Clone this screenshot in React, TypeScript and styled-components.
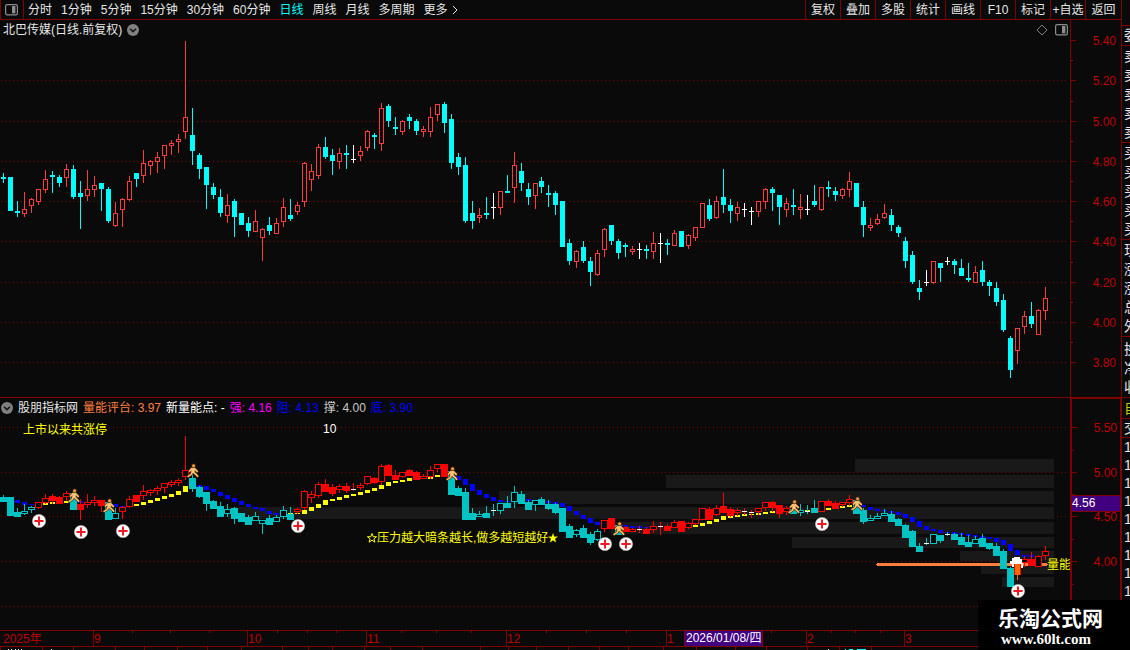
import React from 'react';
import styled, { createGlobalStyle } from 'styled-components';

const BG = '#0a0a0a';
const LINE = '#800000';
const LABEL = '#c00000';

const GlobalStyle = createGlobalStyle`
  * { box-sizing: border-box; }
  body {
    margin: 0;
    background: ${BG};
    color: #e6e6e6;
    font-family: "Liberation Sans", "Noto Sans CJK SC", sans-serif;
    font-size: 12px;
    line-height: 16px;
    overflow: hidden;
  }
  svg { display: block; }
  svg text { font-size: 12px; }
`;

const Page = styled.div`
  position: relative;
  display: flex;
  height: 100vh;
  overflow: hidden;
`;

const Main = styled.main`
  flex: 1;
  min-width: 0;
  display: flex;
  flex-direction: column;

  & > * { flex-shrink: 0; }
`;

const Toolbar = styled.header`
  display: flex;
  height: 20px;
  border-bottom: 1px solid ${LINE};
  border-left: 1px solid ${LINE};
  overflow: hidden;
`;

const ToolButton = styled.button<{ $active?: boolean }>`
  display: block;
  margin: 0;
  padding: 0;
  border: 0;
  background: none;
  font: inherit;
  line-height: 18px;
  white-space: nowrap;
  color: ${(p) => (p.$active ? '#00ffff' : '#e6e6e6')};
`;

const LayoutButton = styled(ToolButton)`
  width: 23px;
  padding: 0 0 0 4px;
  border-right: 1px solid ${LINE};
`;

const Periods = styled.nav`
  flex: 1;
  display: flex;
  gap: 9px;
  padding-left: 4px;
`;

const MoreButton = styled(ToolButton)`
  display: flex;
  align-items: center;
  gap: 4px;
`;

const Actions = styled.nav`
  display: flex;
`;

const ActionButton = styled(ToolButton)`
  width: 35px;
  border-left: 1px solid ${LINE};

  &:last-child { width: 36px; }
`;

const Panel = styled.section`
  display: flex;
  border-bottom: 1px solid ${LINE};
`;

const Plot = styled.div`
  flex: 1;
  min-width: 0;
`;

const PlotHeader = styled.div`
  display: flex;
  align-items: center;
  height: 19px;
  gap: 5px;
  padding: 0 2px 0 1px;
  white-space: nowrap;
`;

const Title = styled.h1`
  margin: 0 0 0 2px;
  font: inherit;
`;

const HeaderTools = styled.div`
  display: flex;
  align-items: center;
  gap: 7px;
  margin-left: auto;
`;

const Reading = styled.span<{ $color: string }>`
  color: ${(p) => p.$color};
`;

const Axis = styled.div<{ $boxed?: boolean }>`
  position: relative;
  width: 51px;
  border: 0 solid ${LINE};
  border-width: ${(p) => (p.$boxed ? '1px 1px 0 2px' : '0 0 0 1px')};
`;

const ValueTag = styled.output`
  position: absolute;
  left: 0;
  right: 0;
  top: 96px;
  height: 17px;
  line-height: 15px;
  border: 1px solid ${LINE};
  border-width: 1px 0;
  background: #400080;
  color: #ffffff;
`;

const DateRow = styled.div`
  position: relative;
  height: 16px;
  border-bottom: 1px solid ${LINE};
`;

const DateTag = styled.time`
  position: absolute;
  left: 684px;
  top: 0;
  width: 79px;
  height: 15px;
  line-height: 14px;
  padding-left: 1px;
  border: 1px solid ${LINE};
  border-width: 0 1px;
  background: #400080;
  color: #ffffff;
  white-space: nowrap;
`;

const Side = styled.aside`
  width: 9px;
  overflow: hidden;
  border-left: 1px solid ${LINE};
  padding-top: 25px;
  font-size: 14px;
`;

const SideGroup = styled.div<{ $row: number; $pad?: number; $color?: string }>`
  border-top: 1px solid ${LINE};
  padding: ${(p) => p.$pad || 0}px 0 0 2px;
  line-height: ${(p) => p.$row}px;
  color: ${(p) => p.$color || '#e6e6e6'};
`;

const SideRow = styled.div`
  white-space: nowrap;
`;

const Watermark = styled.footer`
  position: absolute;
  right: 0;
  bottom: 0;
  width: 152px;
  height: 50px;
  padding: 4px 0 0 20px;
  background: #000000;
  color: #ffffff;
`;

const MarkName = styled.div`
  font: bold 21px/26px "Noto Sans CJK SC", sans-serif;
  white-space: nowrap;
`;

const MarkLink = styled.a`
  display: block;
  padding-left: 3px;
  font: bold 15px/18px "Liberation Serif", serif;
  color: #ffffff;
  text-decoration: none;
`;

// One entry per day: kind (c = fall, r = rise, w = unchanged), high, body top, body bottom, low.
const RAW = `c173,177,179,183 c177,177,211,211 c201,211,213,217 r192,209,214,217 r198,199,206,213
r189,189,202,205 r170,179,190,193 c171,175,177,193 c175,177,183,187 r164,169,178,187
c165,169,197,199 c181,193,197,229 r170,189,196,201 r176,185,190,197 c183,183,189,211
c187,189,221,223 r202,213,226,227 r198,199,210,227 r176,181,200,201 c173,173,179,187
r150,163,176,183 r160,161,166,175 r152,157,162,173 r145,145,156,169 r140,143,146,155
r134,139,142,153 r41,117,132,139 c108,135,151,165 c153,155,169,179 c167,167,185,209
c183,187,195,199 c189,197,213,217 r194,205,216,223 c199,201,217,237 c213,213,225,225
c217,223,231,237 r210,221,232,232 r228,229,238,261 c217,225,231,235 r218,223,234,234
r198,207,222,227 c199,215,219,221 r202,205,212,215 r162,163,202,207 r164,171,180,191
r144,147,176,179 c137,147,157,159 c149,155,161,175 r148,153,162,169 c145,153,155,169
w145,159,160,163 r146,151,156,161 r130,131,148,151 c133,135,137,149 r103,108,144,151
c104,106,121,127 c117,127,129,135 r120,121,132,135 c114,117,121,129 c119,121,131,135
r126,129,132,137 r107,117,132,137 r104,104,115,121 c102,104,123,133 c114,119,163,169
c153,157,167,175 c157,165,221,223 c201,213,221,229 r208,215,218,223 c197,213,215,219
w193,207,208,219 r191,191,208,215 c175,191,193,193 r152,165,188,203 c163,171,183,191
c183,189,197,205 r183,183,196,209 c177,181,187,193 c185,193,195,207 c191,193,205,215
c201,201,247,247 c239,243,261,265 r250,251,262,268 c241,247,261,263 c257,261,272,286
r250,253,275,276 r228,229,250,257 c225,225,241,245 c239,241,253,259 c243,245,247,257
r246,249,252,255 w243,249,250,259 c245,249,251,259 r232,243,252,259 w233,243,244,263
c239,243,245,255 r230,233,246,246 c231,231,247,247 r234,235,246,249 r227,227,238,241
r203,203,228,228 c199,205,219,221 r196,201,218,219 c169,197,205,213 c199,205,211,223
r202,207,214,221 w203,209,210,217 w207,211,212,225 r201,201,212,217 r188,189,202,209
c187,189,193,211 c195,195,207,225 r198,203,210,217 c189,205,207,215 r194,207,210,219
w195,209,210,215 c185,201,205,207 r187,187,210,211 c181,187,189,197 c187,191,195,201
r188,189,196,199 r172,181,190,197 c183,183,207,207 c201,207,225,237 r218,225,228,231
r214,219,224,225 r204,213,218,219 c209,215,225,231 c225,227,233,237 c237,241,261,268
c251,255,282,284 c280,288,292,300 w270,282,283,286 r261,261,283,284 c263,263,268,282
w257,261,262,265 c259,261,265,274 c259,268,276,276 c263,278,280,282 r266,272,283,283
c261,270,282,286 c280,282,286,296 c282,288,302,306 c294,300,330,332 c336,338,370,378
r328,328,351,364 r311,316,327,334 c302,316,324,328 r309,310,335,335 r287,298,311,320`;

interface Candle {
  x: number;
  kind: string;
  high: number;
  top: number;
  bottom: number;
  low: number;
}

const CANDLES: Candle[] = RAW.split(/\s+/).map((s, i) => {
  const [high, top, bottom, low] = s.slice(1).split(',').map(Number);
  return { x: (i < 77 ? 3 : 2) + 7 * i, kind: s[0], high, top, bottom, low };
});

const centre = (i: number) => CANDLES[i].x;

// Strong (red) stretches of the lower chart, first and last day.
const STRONG = [[5, 9], [11, 14], [17, 26], [42, 63], [86, 87], [89, 112], [117, 121], [146, 149]];
const isStrong = (i: number) => STRONG.some(([a, b]) => i >= a && i <= b);

// Average ribbon: day, top, height.
const BLUE = `2,500,3 3,502,3 4,504,1 11,501,2 12,502,1 16,504,3 17,506,1 28,485,2 29,486,4 30,489,3 31,492,4
32,495,4 33,498,4 34,501,4 35,504,3 36,507,2 37,508,3 38,511,3 39,513,2 65,476,4 66,479,6 67,484,7 68,490,5
69,494,4 70,497,4 71,500,2 72,501,1 75,499,2 78,501,2 79,502,2 80,503,4 81,506,5 82,511,4 83,515,4 84,518,5
85,522,3 88,525,2 89,525,2 90,526,2 91,526,2 92,527,1 123,505,2 124,507,3 125,509,2 126,510,1 127,511,2
128,512,3 129,514,4 130,517,5 131,521,6 132,526,4 133,529,2 134,530,3 135,532,1 136,532,2 137,533,2 138,534,2
139,535,2 140,536,2 141,537,2 142,538,4 143,540,5 144,544,7 145,550,5 146,555,2 147,555,2`;
const YELLOW = `6,503,2 7,502,2 9,501,2 19,504,2 20,502,3 21,500,3 22,498,3 23,496,3 24,494,3 25,491,4 26,486,6
41,513,1 42,513,1 43,510,4 44,507,4 45,504,4 46,500,5 47,499,2 48,497,3 49,495,3 50,494,2 51,492,3 52,490,3
53,488,3 54,485,4 55,482,4 56,481,2 57,480,2 58,478,3 60,477,2 61,477,2 62,475,2 99,525,2 100,523,3 101,521,3
102,519,3 103,516,4 104,516,2 105,515,2 106,514,2 107,514,1 108,513,2 109,512,2 110,511,2 115,510,2 118,508,2
120,506,2 121,505,2`;
const ribbon = (s: string) => s.split(/\s+/).map((t) => t.split(',').map(Number));

// Pressure bars: start x, top, height. They all end at x = 1054.
const PRESSURE = [
  [855, 459, 13], [666, 475, 13], [499, 491, 13], [228, 507, 12], [611, 522, 12],
  [792, 537, 11], [960, 551, 10], [981, 566, 8], [1002, 577, 10],
];

const MEDIC = [[39, 521], [81, 532], [123, 531], [298, 526], [605, 544], [626, 544], [822, 524], [1018, 591]];
const RUNNER = [[74, 496], [109, 506], [193, 471], [452, 474], [619, 529], [794, 507], [857, 504]];

function GridLine({ y }: { y: number }) {
  return <line x1="1" x2="1068" y1={y} y2={y} stroke="#780808" strokeDasharray="1 3" transform="translate(0 .5)" />;
}

function PriceChart() {
  return (
    <svg width="100%" height="358" shapeRendering="crispEdges" role="img" aria-label="日线">
      <g transform="translate(0 -39)">
        {[80, 121, 161, 201, 241, 282, 322, 362].map((y) => <GridLine key={y} y={y} />)}
        {CANDLES.map((c) => {
          const color = c.kind === 'r' ? '#ff3c3c' : c.kind === 'c' ? '#00ffff' : '#ffffff';
          return (
            <g key={c.x} fill={color}>
              <rect x={c.x} y={c.high} width="1" height={c.low - c.high} />
              <rect x={c.x - 2} y={c.top} width="5" height={c.bottom - c.top} />
              {c.kind === 'r' && (
                <rect x={c.x - 1} y={c.top + 1} width="3" height={c.bottom - c.top - 2} fill={BG} />
              )}
            </g>
          );
        })}
      </g>
    </svg>
  );
}

const low = (v: number) => Math.round(472 + (v - 121) * 0.444);

function EnergyCandle({ c, i }: { c: Candle; i: number }) {
  if (i === 145) return null;
  const color = isStrong(i) ? '#ff0000' : '#00c4c4';
  const high = low(c.high);
  const top = low(c.top);
  const bottom = low(c.bottom);
  const height = c.kind === 'c' ? bottom - top + 4 : Math.max(bottom - top, 3);
  return (
    <g fill={color}>
      <rect x={c.x} y={high} width="1" height={Math.max(low(c.low) - high, 1)} />
      {c.kind === 'w' ? (
        <rect x={c.x - 2} y={top} width="5" height="1" fill="#ffffff" />
      ) : (
        <rect x={c.x - 3} y={top} width="7" height={height} />
      )}
      {c.kind === 'r' && <rect x={c.x - 2} y={top + 1} width="5" height={height - 2} fill={BG} />}
    </g>
  );
}

function Medic({ x, y }: { x: number; y: number }) {
  return (
    <g transform={`translate(${x} ${y})`} shapeRendering="auto">
      <circle r="6.6" fill="#ffffff" stroke="#b8b8b8" strokeWidth=".6" />
      <path d="M-4.6 0H4.6M0-4.6V4.6" stroke="#f01822" strokeWidth="2" />
    </g>
  );
}

function Runner({ x, y }: { x: number; y: number }) {
  const torso = 'M-1.6-2.8L1.8-2.8L1.6 1.6L-1.6 2Z';
  const limbs = 'M-1.2-2.4L-3.4 0M1.4-2.4L4.2 .4M-.8 1.6L-2 3.6L-4.8 5.4M.8 1.6L3 3.4L4.6 5.2';
  return (
    <g transform={`translate(${x} ${y})`} shapeRendering="auto" strokeLinecap="round" strokeLinejoin="round">
      <circle cx=".6" cy="-5.2" r="2.3" fill="#4c2a08" />
      <path d={limbs} fill="none" stroke="#4c2a08" strokeWidth="2.8" />
      <path d={torso} fill="#ffbe6c" stroke="#4c2a08" strokeWidth="1" />
      <circle cx=".6" cy="-5.2" r="1.6" fill="#e89840" />
      <path d={limbs} fill="none" stroke="#ffbe6c" strokeWidth="1.7" />
      <path d={torso} fill="#ffc878" />
    </g>
  );
}

const STAR = 'M0-4.5L1.2-1.3H4.6L1.9.8L2.9 4.2L0 2.2L-2.9 4.2L-1.9.8L-4.6-1.3H-1.2Z';

function EnergyChart() {
  return (
    <svg width="100%" height="213" shapeRendering="crispEdges" role="img" aria-label="量能评台">
      <g transform="translate(0 -417)">
        {[427, 472, 516, 561, 606].map((y) => <GridLine key={y} y={y} />)}
        {PRESSURE.map(([x, y, h]) => (
          <rect key={y} x={x} y={y} width={1054 - x} height={h} fill="#191919" />
        ))}
        {ribbon(BLUE).map(([i, y, h]) => (
          <rect key={i} x={centre(i) - 2} y={y} width="5" height={h} fill="#0000ff" />
        ))}
        {ribbon(YELLOW).map(([i, y, h]) => (
          <rect key={i} x={centre(i) - 2} y={y} width="5" height={h} fill="#ffff00" />
        ))}
        <rect x="877" y="563" width="170" height="3" fill="#ff7f40" />
        <rect x="876" y="564" width="172" height="1" fill="#ff7f40" />
        {CANDLES.map((c, i) => <EnergyCandle key={c.x} c={c} i={i} />)}
        <path d="M1014 557h6v2h2v4h1v5h-3v-3h-6v2h-2v-3h-2v-3h2v-3h2z" fill="#ffffff" />
        <rect x="1014" y="564" width="7" height="11" fill="#ff0000" />
        <rect x="1015" y="564" width="5" height="11" fill="#ff6a00" />
        <rect x="1017" y="575" width="1" height="5" fill="#ff6a00" />
        {RUNNER.map(([x, y]) => <Runner key={x} x={x} y={y} />)}
        {MEDIC.map(([x, y]) => <Medic key={x} x={x} y={y} />)}
        <g fill="#ffff00">
          <text x="23" y="434">上市以来共涨停</text>
          <text x="377" y="542">压力越大暗条越长,做多越短越好</text>
          <text x="1047" y="569">量能</text>
        </g>
        <text x="323" y="433" fill="#ffffff">10</text>
        <g shapeRendering="auto" stroke="#ffff00">
          <path d={STAR} transform="translate(372 538)" fill="none" />
          <path d={STAR} transform="translate(553 538)" fill="#ffff00" strokeWidth=".3" />
        </g>
      </g>
    </svg>
  );
}

interface ScaleProps {
  height: number;
  marks: [string, number][];
  minor: number[];
}

function Scale({ height, marks, minor }: ScaleProps) {
  return (
    <svg width="100%" height={height} shapeRendering="crispEdges">
      {marks.map(([label, y]) => (
        <g key={label}>
          <rect y={y} width="5" height="1" fill={LINE} />
          <text x="45" y={y + 5} textAnchor="end" fill={LABEL}>{label}</text>
        </g>
      ))}
      {minor.map((y) => <rect key={y} y={y} width="2" height="1" fill={LINE} />)}
    </svg>
  );
}

const MONTHS: [number, string][] = [[93, '9'], [247, '10'], [366, '11'], [506, '12'], [666, '1'], [806, '2'], [904, '3']];
const WEEKS = [132, 170, 209, 277, 307, 336, 401, 436, 471, 546, 586, 626, 771, 831, 855, 880];
const TABS = [0, 42, 73, 115, 144, 177, 207, 241, 282, 308, 332, 364, 390, 422, 480, 508, 536, 568, 599, 628, 663, 696, 735, 766, 807, 839, 871];

function DateScale() {
  return (
    <svg width="100%" height="15" shapeRendering="crispEdges">
      <text x="3" y="12" fill={LABEL}>2025年</text>
      {MONTHS.map(([x, label]) => (
        <g key={x}>
          <rect x={x} width="1" height="15" fill={LINE} />
          <text x={x + 1} y="12" fill={LABEL}>{label}</text>
        </g>
      ))}
      {WEEKS.map((x) => <rect key={x} x={x} width="1" height="2" fill={LINE} />)}
    </svg>
  );
}

function TabEdges() {
  return (
    <svg width="100%" height="3" shapeRendering="crispEdges">
      {TABS.map((x) => <rect key={x} x={x} width="1" height="3" fill={LINE} />)}
      <path d="M8 2h1v1h-1zM11 2h1v1h-1zM15 2h1v1h-1zM18 2h1v1h-1zM21 2h1v1h-1zM51 2h1v1h-1zM828 2h1v1h-1z" fill="#e6e6e6" />
      <path d="M845 2h1v1h-1zM849 2h4v1h-4zM857 2h9v1h-9z" fill="#00ffff" />
    </svg>
  );
}

function PanelIcon() {
  return (
    <svg width="13" height="12" viewBox="0 0 13 12">
      <rect x=".6" y=".6" width="11.8" height="10.2" rx="1.6" fill="none" stroke="#8c8c8c" strokeWidth="1.2" />
      <rect x="7" y="2" width="3.4" height="7.4" fill="#8c8c8c" />
    </svg>
  );
}

function DropIcon() {
  return (
    <svg width="12" height="12" viewBox="0 0 12 12">
      <circle cx="6" cy="6" r="6" fill="#808080" />
      <path d="M3 4.8L6 7.6L9 4.8" fill="none" stroke="#161616" strokeWidth="1.5" />
    </svg>
  );
}

const PERIODS = ['分时', '1分钟', '5分钟', '15分钟', '30分钟', '60分钟', '日线', '周线', '月线', '多周期'];
const ACTIONS = ['复权', '叠加', '多股', '统计', '画线', 'F10', '标记', '+自选', '返回'];

const READINGS: [string, string][] = [
  ['股朋指标网', '#e6e6e6'],
  ['量能评台: 3.97', '#ff7f40'],
  ['新量能点: -', '#ffffff'],
  ['强: 4.16', '#ff00ff'],
  ['阻: 4.13', '#0000ff'],
  ['撑: 4.00', '#c8c8c8'],
  ['底: 3.90', '#0000ff'],
];

const SIDE: { rows: string; row: number; pad?: number; color?: string }[] = [
  { rows: '委', row: 19 },
  { rows: '卖卖卖卖卖', row: 19, pad: 1 },
  { rows: '买买买买买', row: 19, pad: 1 },
  { rows: '现涨涨总外', row: 19, pad: 1 },
  { rows: '换净收', row: 19, pad: 3 },
  { rows: '自', row: 20, color: '#c8c800' },
  { rows: '交', row: 18 },
  { rows: '111111111', row: 18 },
];

export default function App() {
  return (
    <>
      <GlobalStyle />
      <Page>
        <Main>
          <Toolbar>
            <LayoutButton aria-label="布局"><PanelIcon /></LayoutButton>
            <Periods>
              {PERIODS.map((p) => <ToolButton key={p} $active={p === '日线'}>{p}</ToolButton>)}
              <MoreButton>
                更多
                <svg width="6" height="10" viewBox="0 0 6 10">
                  <path d="M1 1L5 5L1 9" fill="none" stroke="#e6e6e6" />
                </svg>
              </MoreButton>
            </Periods>
            <Actions>
              {ACTIONS.map((a) => <ActionButton key={a}>{a}</ActionButton>)}
            </Actions>
          </Toolbar>

          <Panel>
            <Plot>
              <PlotHeader>
                <Title>北巴传媒(日线.前复权)</Title>
                <DropIcon />
                <HeaderTools>
                  <svg width="12" height="12" viewBox="0 0 12 12">
                    <path d="M6 1L11 6L6 11L1 6Z" fill="none" stroke="#808080" />
                  </svg>
                  <PanelIcon />
                </HeaderTools>
              </PlotHeader>
              <PriceChart />
            </Plot>
            <Axis>
              <Scale
                height={377}
                marks={[['5.40', 20], ['5.20', 60], ['5.00', 101], ['4.80', 141], ['4.60', 181], ['4.40', 221], ['4.20', 262], ['4.00', 302], ['3.80', 342]]}
                minor={[40, 81, 121, 161, 201, 242, 282, 322]}
              />
            </Axis>
          </Panel>

          <Panel>
            <Plot>
              <PlotHeader>
                <DropIcon />
                {READINGS.map(([text, color]) => <Reading key={text} $color={color}>{text}</Reading>)}
              </PlotHeader>
              <EnergyChart />
            </Plot>
            <Axis $boxed>
              <Scale
                height={231}
                marks={[['5.50', 28], ['5.00', 73], ['4.50', 117], ['4.00', 162]]}
                minor={[51, 95, 140, 185]}
              />
              <ValueTag>4.56</ValueTag>
            </Axis>
          </Panel>

          <DateRow>
            <DateScale />
            <DateTag dateTime="2026-01-08">2026/01/08/四</DateTag>
          </DateRow>
          <TabEdges />
        </Main>

        <Side>
          {SIDE.map((g) => (
            <SideGroup key={g.rows} $row={g.row} $pad={g.pad} $color={g.color}>
              {[...g.rows].map((t, i) => <SideRow key={i}>{t}</SideRow>)}
            </SideGroup>
          ))}
        </Side>

        <Watermark>
          <MarkName>乐淘公式网</MarkName>
          <MarkLink href="#">www.60lt.com</MarkLink>
        </Watermark>
      </Page>
    </>
  );
}
